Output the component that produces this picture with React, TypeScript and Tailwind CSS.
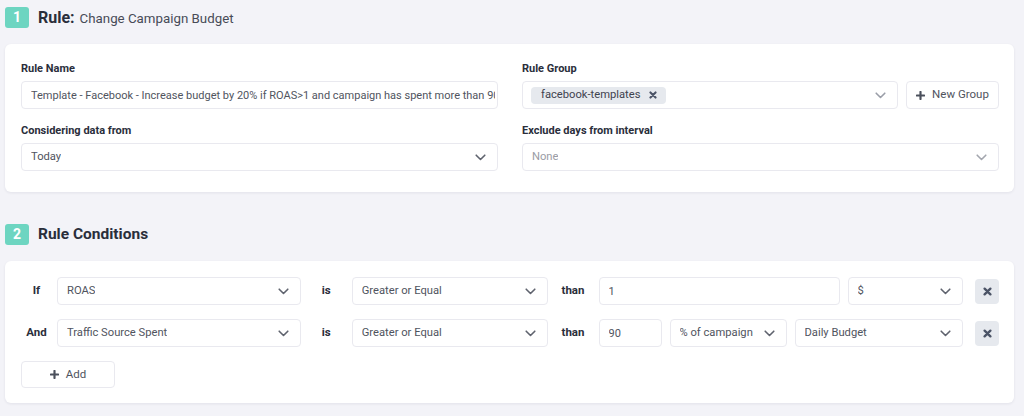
import React from "react";

const Chevron = ({ color = "#5f636e" }: { color?: string }) => (
  <svg width="11" height="7" viewBox="0 0 11 7" fill="none" className="shrink-0">
    <polyline points="1.2,1.2 5.5,5.5 9.8,1.2" stroke={color} strokeWidth="1.6" strokeLinecap="round" strokeLinejoin="round" />
  </svg>
);

const Plus = () => (
  <svg width="9" height="9" viewBox="0 0 10 10" className="shrink-0">
    <path d="M5 1v8M1 5h8" stroke="#4b505c" strokeWidth="2.4" strokeLinecap="round" />
  </svg>
);

const XIcon = ({ size = 9, color = "#4b5366" }: { size?: number; color?: string }) => (
  <svg width={size} height={size} viewBox="0 0 10 10" className="shrink-0">
    <path d="M1.8 1.8l6.4 6.4M8.2 1.8l-6.4 6.4" stroke={color} strokeWidth="2.6" strokeLinecap="round" />
  </svg>
);

const Select = ({ value, className = "", placeholder = false, chevColor }: { value: string; className?: string; placeholder?: boolean; chevColor?: string }) => (
  <div className={`h-[28px] bg-white border border-[#e9e9ef] rounded-[4px] flex items-center justify-between pl-[9px] pr-[11px] ${className}`}>
    <span className={`text-[11.2px] truncate ${placeholder ? "text-[#9a9ca5]" : "text-[#50545e]"}`}>{value}</span>
    <Chevron color={chevColor} />
  </div>
);

const Input = ({ value, className = "" }: { value: string; className?: string }) => (
  <input
    readOnly
    value={value}
    className={`block h-[28px] bg-white border border-[#e9e9ef] rounded-[4px] pl-[9px] pr-[2px] text-[11px] text-[#50545e] outline-none ${className}`}
    style={{ fontFamily: "Roboto, 'Noto Sans', sans-serif" }}
  />
);

const Label = ({ children }: { children: React.ReactNode }) => (
  <div className="text-[11px] font-bold text-[#2a2e3b] leading-[16px] mb-[4px]">{children}</div>
);

const Badge = ({ n }: { n: string }) => (
  <div className="w-[24px] h-[21px] rounded-[3px] bg-[#6dd5c1] text-white text-[14px] font-bold flex items-center justify-center">{n}</div>
);

const Word = ({ children, w }: { children: React.ReactNode; w: string }) => (
  <div className={`${w} shrink-0 text-center text-[11.5px] font-bold text-[#2a2e3b]`}>{children}</div>
);

export default function App() {
  return (
    <div className="w-[1024px] h-[416px] bg-[#f3f3f8] pl-[5px] pr-[10px] pt-[7px] overflow-hidden" style={{ fontFamily: "Roboto, 'Noto Sans', sans-serif" }}>
      <div className="flex items-center h-[21px]">
        <Badge n="1" />
        <div className="ml-[9px] flex items-baseline text-[#2a2e3b]">
          <span className="text-[16px] font-bold">Rule:</span>
          <span className="ml-[5px] text-[13.3px] text-[#474b57]">Change Campaign Budget</span>
        </div>
      </div>

      <div className="mt-[16px] bg-white rounded-[6px] shadow-[0_1px_3px_rgba(30,30,60,0.08)] pt-[17px] pb-[21px] pl-[16px] pr-[15px]">
        <div className="grid grid-cols-2 gap-x-[24px] gap-y-[14px]">
          <div>
            <Label>Rule Name</Label>
            <Input className="w-full" value="Template - Facebook - Increase budget by 20% if ROAS>1 and campaign has spent more than 90% of daily budget" />
          </div>
          <div>
            <Label>Rule Group</Label>
            <div className="flex gap-[8px]">
              <div className="flex-1 h-[28px] bg-white border border-[#e9e9ef] rounded-[4px] flex items-center justify-between pl-[8px] pr-[11px]">
                <div className="h-[17px] bg-[#e6e9ee] rounded-[4px] flex items-center pl-[10px] pr-[9px] gap-[9px]">
                  <span className="text-[11.2px] text-[#3f434e]">facebook-templates</span>
                  <XIcon size={8} color="#4b5366" />
                </div>
                <Chevron color="#9a9ea8" />
              </div>
              <div className="w-[93px] h-[28px] bg-white border border-[#e9e9ef] rounded-[4px] flex items-center justify-center gap-[7px]">
                <Plus />
                <span className="text-[11.5px] text-[#50545e]">New Group</span>
              </div>
            </div>
          </div>
          <div>
            <Label>Considering data from</Label>
            <Select value="Today" />
          </div>
          <div>
            <Label>Exclude days from interval</Label>
            <Select value="None" placeholder chevColor="#a3a6ae" />
          </div>
        </div>
      </div>

      <div className="mt-[32px] flex items-center h-[21px]">
        <Badge n="2" />
        <span className="ml-[9px] text-[15.5px] font-bold text-[#2a2e3b]">Rule Conditions</span>
      </div>

      <div className="mt-[16px] bg-white rounded-[6px] shadow-[0_1px_3px_rgba(30,30,60,0.08)] pt-[16px] pb-[15px] pl-[16px] pr-[15px] flex flex-col gap-[14px]">
        <div className="flex items-center">
          <Word w="w-[31px]">If</Word>
          <Select value="ROAS" className="ml-[5px] w-[244px]" />
          <Word w="w-[51px]">is</Word>
          <Select value="Greater or Equal" className="w-[196px]" />
          <Word w="w-[51px]">than</Word>
          <div className="flex gap-[8px] w-[365px]">
            <Input value="1" className="w-[241px]" />
            <Select value="$" className="flex-1" />
          </div>
          <button className="ml-[12px] w-[24px] h-[25px] rounded-[4px] bg-[#e6e9ee] flex items-center justify-center">
            <XIcon size={9} />
          </button>
        </div>
        <div className="flex items-center">
          <Word w="w-[31px]">And</Word>
          <Select value="Traffic Source Spent" className="ml-[5px] w-[244px]" />
          <Word w="w-[51px]">is</Word>
          <Select value="Greater or Equal" className="w-[196px]" />
          <Word w="w-[51px]">than</Word>
          <div className="flex gap-[8px] w-[365px]">
            <Input value="90" className="w-[63px]" />
            <Select value="% of campaign" className="w-[117px]" />
            <Select value="Daily Budget" className="flex-1" />
          </div>
          <button className="ml-[12px] w-[24px] h-[25px] rounded-[4px] bg-[#e6e9ee] flex items-center justify-center">
            <XIcon size={9} />
          </button>
        </div>
        <div className="w-[94px] h-[27px] bg-white border border-[#e9e9ef] rounded-[4px] flex items-center justify-center gap-[7px]">
          <Plus />
          <span className="text-[11.5px] text-[#50545e]">Add</span>
        </div>
      </div>
    </div>
  );
}
